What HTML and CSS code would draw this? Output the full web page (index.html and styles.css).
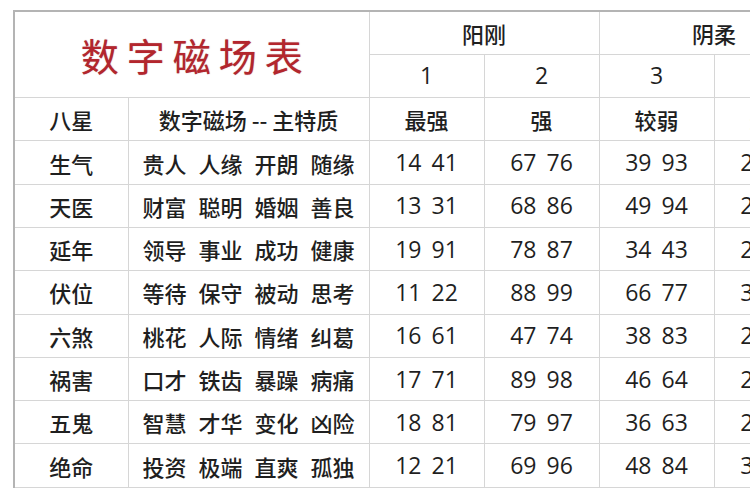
FILE: index.html
```html
<!DOCTYPE html>
<html lang="zh-CN">
<head>
<meta charset="utf-8">
<title>数字磁场表</title>
<link rel="stylesheet" href="styles.css">
</head>
<body>
<div class="page">
  <table class="grid">
    <colgroup>
      <col class="c-star"><col class="c-desc"><col class="c-num"><col class="c-num"><col class="c-num"><col class="c-num">
    </colgroup>
    <tr>
      <td class="title" colspan="2" rowspan="2">数字磁场表</td>
      <td class="cjk" colspan="2">阳刚</td>
      <td class="cjk" colspan="2">阴柔</td>
    </tr>
    <tr>
      <td class="num">1</td><td class="num">2</td><td class="num">3</td><td class="num">4</td>
    </tr>
    <tr>
      <td class="cjk">八星</td>
      <td class="cjk">数字磁场 -- 主特质</td>
      <td class="cjk">最强</td><td class="cjk">强</td><td class="cjk">较弱</td><td class="cjk">最弱</td>
    </tr>
    <tr>
      <td class="cjk">生气</td>
      <td class="cjk"><div class="words"><span>贵人</span><span>人缘</span><span>开朗</span><span>随缘</span></div></td>
      <td class="num"><div class="pair"><span>14</span><span>41</span></div></td>
      <td class="num"><div class="pair"><span>67</span><span>76</span></div></td>
      <td class="num"><div class="pair"><span>39</span><span>93</span></div></td>
      <td class="num"><div class="pair"><span>28</span><span>82</span></div></td>
    </tr>
    <tr>
      <td class="cjk">天医</td>
      <td class="cjk"><div class="words"><span>财富</span><span>聪明</span><span>婚姻</span><span>善良</span></div></td>
      <td class="num"><div class="pair"><span>13</span><span>31</span></div></td>
      <td class="num"><div class="pair"><span>68</span><span>86</span></div></td>
      <td class="num"><div class="pair"><span>49</span><span>94</span></div></td>
      <td class="num"><div class="pair"><span>27</span><span>72</span></div></td>
    </tr>
    <tr>
      <td class="cjk">延年</td>
      <td class="cjk"><div class="words"><span>领导</span><span>事业</span><span>成功</span><span>健康</span></div></td>
      <td class="num"><div class="pair"><span>19</span><span>91</span></div></td>
      <td class="num"><div class="pair"><span>78</span><span>87</span></div></td>
      <td class="num"><div class="pair"><span>34</span><span>43</span></div></td>
      <td class="num"><div class="pair"><span>26</span><span>62</span></div></td>
    </tr>
    <tr>
      <td class="cjk">伏位</td>
      <td class="cjk"><div class="words"><span>等待</span><span>保守</span><span>被动</span><span>思考</span></div></td>
      <td class="num"><div class="pair"><span>11</span><span>22</span></div></td>
      <td class="num"><div class="pair"><span>88</span><span>99</span></div></td>
      <td class="num"><div class="pair"><span>66</span><span>77</span></div></td>
      <td class="num"><div class="pair"><span>33</span><span>44</span></div></td>
    </tr>
    <tr>
      <td class="cjk">六煞</td>
      <td class="cjk"><div class="words"><span>桃花</span><span>人际</span><span>情绪</span><span>纠葛</span></div></td>
      <td class="num"><div class="pair"><span>16</span><span>61</span></div></td>
      <td class="num"><div class="pair"><span>47</span><span>74</span></div></td>
      <td class="num"><div class="pair"><span>38</span><span>83</span></div></td>
      <td class="num"><div class="pair"><span>29</span><span>92</span></div></td>
    </tr>
    <tr>
      <td class="cjk">祸害</td>
      <td class="cjk"><div class="words"><span>口才</span><span>铁齿</span><span>暴躁</span><span>病痛</span></div></td>
      <td class="num"><div class="pair"><span>17</span><span>71</span></div></td>
      <td class="num"><div class="pair"><span>89</span><span>98</span></div></td>
      <td class="num"><div class="pair"><span>46</span><span>64</span></div></td>
      <td class="num"><div class="pair"><span>23</span><span>32</span></div></td>
    </tr>
    <tr>
      <td class="cjk">五鬼</td>
      <td class="cjk"><div class="words"><span>智慧</span><span>才华</span><span>变化</span><span>凶险</span></div></td>
      <td class="num"><div class="pair"><span>18</span><span>81</span></div></td>
      <td class="num"><div class="pair"><span>79</span><span>97</span></div></td>
      <td class="num"><div class="pair"><span>36</span><span>63</span></div></td>
      <td class="num"><div class="pair"><span>24</span><span>42</span></div></td>
    </tr>
    <tr>
      <td class="cjk">绝命</td>
      <td class="cjk"><div class="words"><span>投资</span><span>极端</span><span>直爽</span><span>孤独</span></div></td>
      <td class="num"><div class="pair"><span>12</span><span>21</span></div></td>
      <td class="num"><div class="pair"><span>69</span><span>96</span></div></td>
      <td class="num"><div class="pair"><span>48</span><span>84</span></div></td>
      <td class="num"><div class="pair"><span>37</span><span>73</span></div></td>
    </tr>
  </table>
</div>
</body>
</html>
```

FILE: styles.css
```css
html, body {
  margin: 0;
  padding: 0;
  background: #ffffff;
  overflow: hidden;
  width: 750px;
  height: 500px;
}

.page {
  padding: 10px 0 0 13px;
  width: 900px;
}

.grid {
  border-collapse: collapse;
  table-layout: fixed;
  width: 814px;
  color: #1f1f1f;
  font-family: "Noto Sans CJK SC", "Noto Sans", sans-serif;
  border-top: 2px solid #b4b4b4;
  border-left: 2px solid #b4b4b4;
}

.c-star { width: 114px; }
.c-desc { width: 241px; }
.c-num { width: 115px; }

.grid tr {
  height: 43.3px;
}

.grid td {
  border: 1px solid #d6d6d6;
  padding: 0;
  text-align: center;
  vertical-align: middle;
  white-space: nowrap;
  line-height: 1;
}

.grid td.cjk {
  font-size: 22px;
  font-weight: 500;
}

.grid td.num {
  font-family: "Open Sans", "Noto Sans", sans-serif;
  font-size: 23px;
}

.grid td.title {
  font-size: 38px;
  font-weight: 400;
  letter-spacing: 8px;
  padding-left: 8px;
  color: #b3262d;
  text-shadow: 0 0 1px rgba(120, 10, 20, 0.5);
}

.words {
  display: flex;
  justify-content: center;
  gap: 12px;
}

.pair {
  display: flex;
  justify-content: center;
  gap: 10px;
}
```
